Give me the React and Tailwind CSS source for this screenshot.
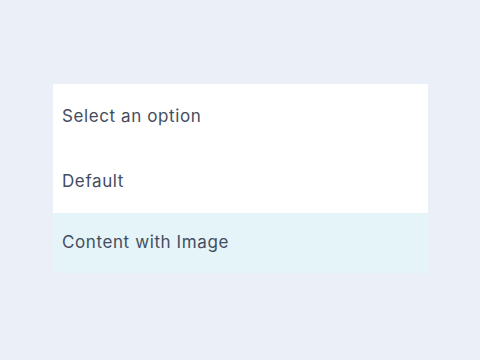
import React from "react";

const options = [
	{ label: "Select an option", h: "h-[66px]" },
	{ label: "Default", h: "h-[63px]" },
	{ label: "Content with Image", h: "h-[60px]", active: true },
];

const App = () => {
	return (
		<div className="flex h-[360px] w-[480px] items-start bg-[#ebeff7] pl-[53px] pt-[84px] font-['Inter',sans-serif]">
			<ul className="flex w-[375px] flex-col bg-white">
				{options.map((o) => (
					<li
						key={o.label}
						className={`flex items-center px-[9px] text-[17px] tracking-[0.6px] text-[#434d60] ${o.h} ${
							o.active ? "bg-[#e5f4f9]" : ""
						}`}
					>
						{o.label}
					</li>
				))}
			</ul>
		</div>
	);
};

export default App;
